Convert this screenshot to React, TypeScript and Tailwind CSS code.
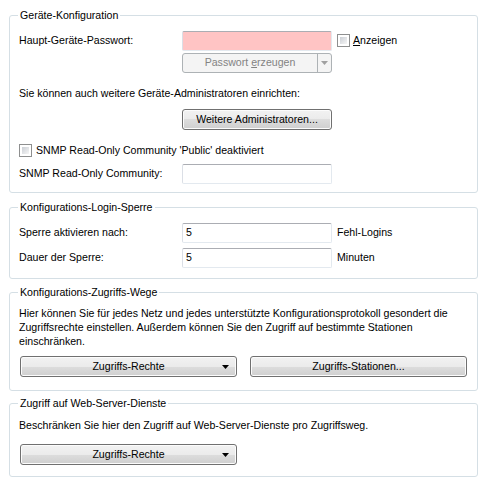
import React from 'react';

const font = { fontFamily: '"Liberation Sans", Arial, sans-serif' };

function Legend({ children }: { children: React.ReactNode }) {
    return <legend className="-ml-[1px] px-[2px] leading-[13px]">{children}</legend>;
}

function Input({ value, pink }: { value?: string; pink?: boolean }) {
    return (
        <div
            className={`w-[150px] h-[20px] border border-[#dbdfe6] border-t-[#abadb3] border-r-[#e3e9ef] border-b-[#e3e9ef] rounded-[2px] px-[3px] flex items-center ${
                pink ? 'bg-[#ffc4c4]' : 'bg-white'
            }`}
        >
            {value}
        </div>
    );
}

function Checkbox() {
    return (
        <span className="inline-block w-[13px] h-[13px] border border-[#8e8f8f] bg-white p-[2px]">
            <span className="block w-full h-full bg-gradient-to-br from-[#cbcfd5] to-[#f6f6f6]" />
        </span>
    );
}

function Arrow({ color = '#000' }: { color?: string }) {
    return (
        <svg width="7" height="4" viewBox="0 0 7 4">
            <path d="M0 0h7L3.5 4z" fill={color} />
        </svg>
    );
}

function Button({ children, wide, arrow }: { children: React.ReactNode; wide?: boolean; arrow?: boolean }) {
    return (
        <div
            className={`relative h-[21px] border border-[#707070] rounded-[3px] flex items-center justify-center ${
                wide ? 'w-[217px]' : 'w-[150px]'
            } bg-[linear-gradient(#f2f2f2_0%,#ebebeb_50%,#dddddd_50%,#cfcfcf_100%)] shadow-[inset_0_0_0_1px_#fcfcfc]`}
        >
            <span>{children}</span>
            {arrow && (
                <span className="absolute right-[7px] top-[8px] flex">
                    <Arrow />
                </span>
            )}
        </div>
    );
}

export default function App() {
    return (
        <div style={font} className="w-[487px] h-[489px] bg-white text-[10.6px] text-black px-[9px] pt-[9px]">
            {/* Geräte-Konfiguration */}
            <fieldset className="border border-[#d5dfe5] rounded-[3px] pl-[9px] pr-[9px] pb-[8px]">
                <Legend>Geräte-Konfiguration</Legend>
                <div className="flex items-center mt-[9px]">
                    <span className="w-[163px]">Haupt-Geräte-Passwort:</span>
                    <Input pink />
                    <span className="ml-[5px] flex items-center gap-[3px]">
                        <Checkbox />
                        <span>
                            <u>A</u>nzeigen
                        </span>
                    </span>
                </div>
                <div className="flex mt-[2px] pl-[163px]">
                    <div className="relative w-[150px] h-[20px] border border-[#adb2b5] rounded-[3px] bg-[#f4f4f4] text-[#838383] flex items-center">
                        <span className="flex-1 text-center">
                            Passwort <u>e</u>rzeugen
                        </span>
                        <span className="w-[14px] h-full border-l border-[#adb2b5] flex items-center justify-center">
                            <Arrow color="#a0a0a0" />
                        </span>
                    </div>
                </div>
                <div className="mt-[14px] leading-[13px]">Sie können auch weitere Geräte-Administratoren einrichten:</div>
                <div className="flex mt-[9px] pl-[163px]">
                    <Button>Weitere Administratoren...</Button>
                </div>
                <div className="flex items-center gap-[4px] mt-[14px] leading-[13px]">
                    <Checkbox />
                    <span>SNMP Read-Only Community 'Public' deaktiviert</span>
                </div>
                <div className="flex items-center mt-[7px]">
                    <span className="w-[163px]">SNMP Read-Only Community:</span>
                    <Input />
                </div>
            </fieldset>

            {/* Konfigurations-Login-Sperre */}
            <fieldset className="mt-[8px] border border-[#d5dfe5] rounded-[3px] pl-[9px] pr-[9px] pb-[10px]">
                <Legend>Konfigurations-Login-Sperre</Legend>
                <div className="flex items-center mt-[9px]">
                    <span className="w-[163px]">Sperre aktivieren nach:</span>
                    <Input value="5" />
                    <span className="ml-[5px]">Fehl-Logins</span>
                </div>
                <div className="flex items-center mt-[5px]">
                    <span className="w-[163px]">Dauer der Sperre:</span>
                    <Input value="5" />
                    <span className="ml-[5px]">Minuten</span>
                </div>
            </fieldset>

            {/* Konfigurations-Zugriffs-Wege */}
            <fieldset className="mt-[7px] border border-[#d5dfe5] rounded-[3px] pl-[9px] pr-[9px] pb-[13px]">
                <Legend>Konfigurations-Zugriffs-Wege</Legend>
                <p className="mt-[7px] leading-[14px]">
                    Hier können Sie für jedes Netz und jedes unterstützte Konfigurationsprotokoll gesondert die
                    <br />
                    Zugriffsrechte einstellen. Außerdem können Sie den Zugriff auf bestimmte Stationen
                    <br />
                    einschränken.
                </p>
                <div className="flex gap-[13px] mt-[8px] pl-[1px]">
                    <Button wide arrow>
                        Zugriffs-Rechte
                    </Button>
                    <Button wide>Zugriffs-Stationen...</Button>
                </div>
            </fieldset>

            {/* Zugriff auf Web-Server-Dienste */}
            <fieldset className="mt-[6px] border border-[#d5dfe5] rounded-[3px] pl-[9px] pr-[9px] pb-[11px]">
                <Legend>Zugriff auf Web-Server-Dienste</Legend>
                <p className="mt-[8px] leading-[14px]">Beschränken Sie hier den Zugriff auf Web-Server-Dienste pro Zugriffsweg.</p>
                <div className="flex mt-[12px] pl-[1px]">
                    <Button wide arrow>
                        Zugriffs-Rechte
                    </Button>
                </div>
            </fieldset>
        </div>
    );
}
